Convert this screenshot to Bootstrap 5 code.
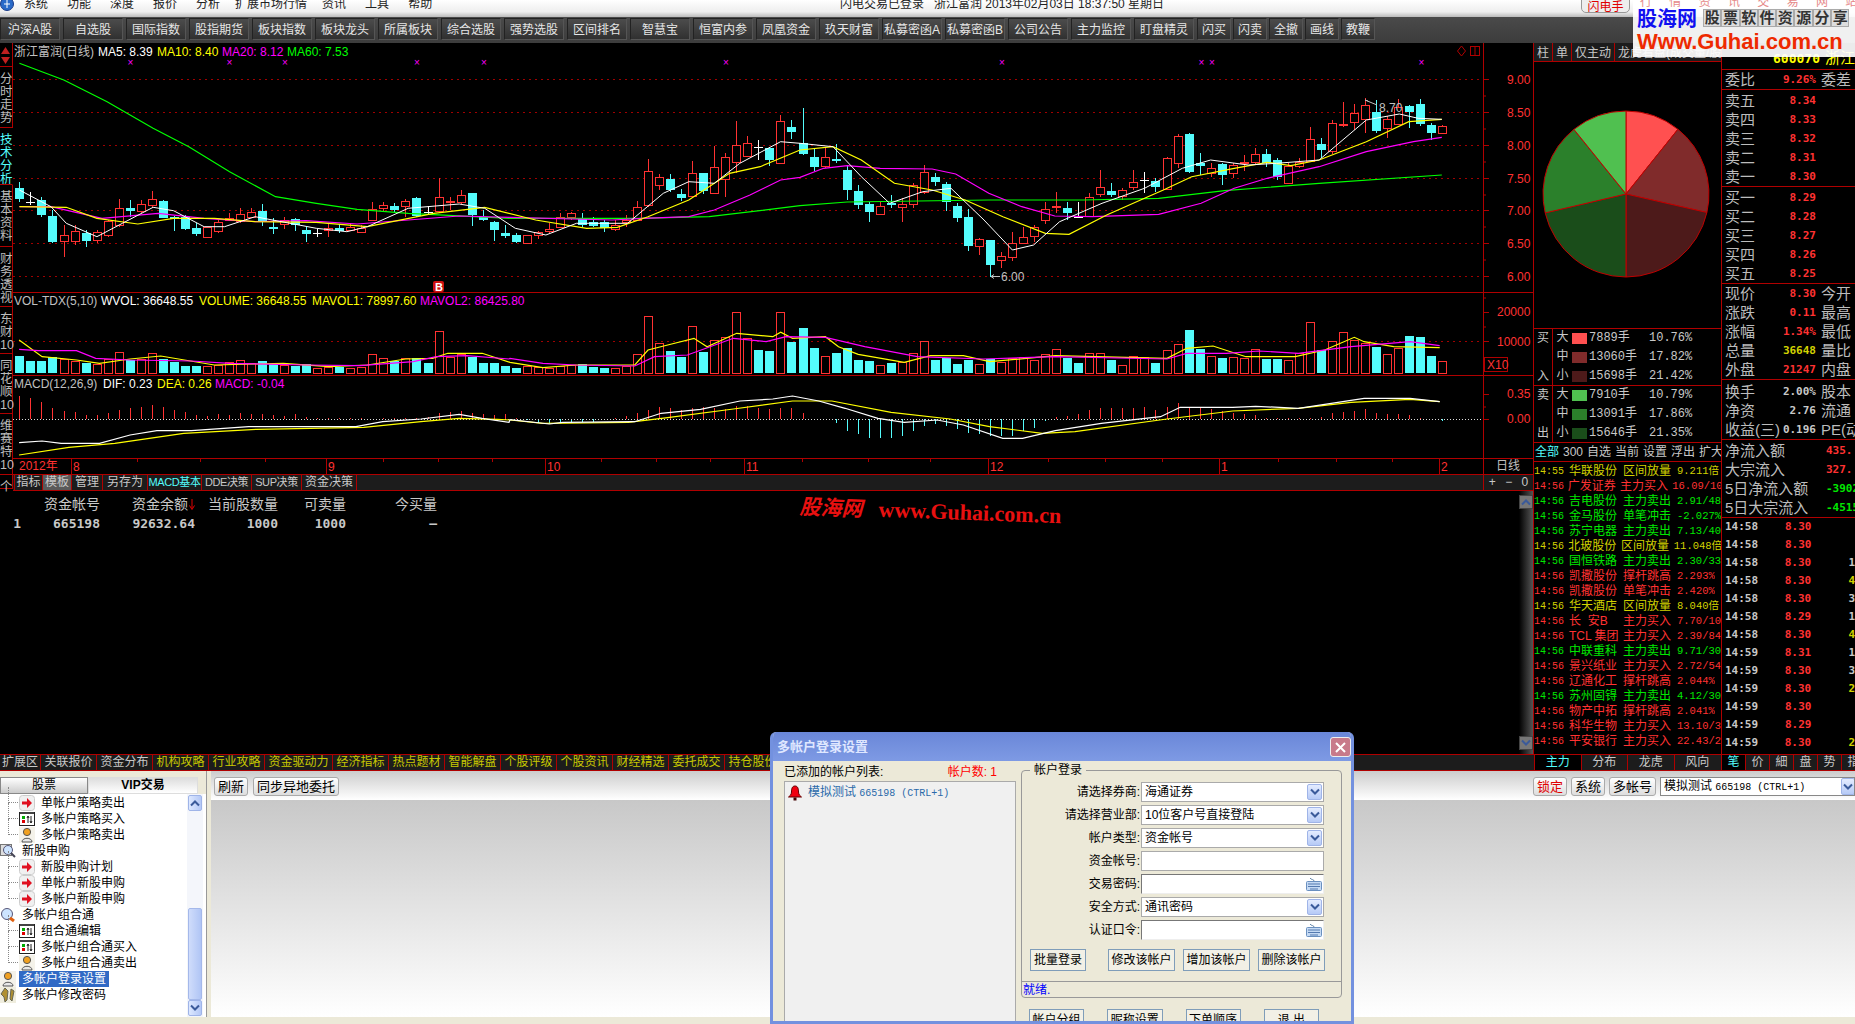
<!DOCTYPE html>
<html lang="zh-CN">
<head>
<meta charset="UTF-8">
<title>闪电手</title>
<link href="https://cdn.jsdelivr.net/npm/bootstrap@5.3.3/dist/css/bootstrap.min.css" rel="stylesheet">
<style>
  html,body{height:1024px;overflow:hidden}
  body{width:1855px;background:#000;color:#c8c8c8;font:12px/16px "Liberation Sans","Noto Sans CJK SC",sans-serif;position:relative}
  svg text{font-family:"Liberation Sans","Noto Sans CJK SC",sans-serif;font-size:12px}
  .mono-10{font-family:"Liberation Mono",monospace;font-size:10px}
  .menu-bar{height:17px;overflow:hidden;line-height:8px;color:#222;background:linear-gradient(#fff,#eee 70%,#bbb);padding-left:24px;gap:19px}
  .menu-wide{margin:0 -4px}
  .menu-title{position:absolute;left:840px;top:0}
  .menu-logo{position:absolute;left:0;top:-3px}
  .flash-btn{position:absolute;left:1581px;top:-4px;width:49px;height:17px;line-height:13px;padding-top:4px;text-align:center;color:#e00000;background:#eee;border:1px solid #999;border-radius:0 0 5px 5px}
  .tool-bar{height:26px;background:linear-gradient(#4a4a4a,#3c3c3c);gap:3px;padding-top:1px}
  .tool-btn{width:60px;height:22px;line-height:22px;text-align:center;color:#e6e6e6;background:linear-gradient(#4c4c4c,#303030);border:1px solid #222;border-right-color:#555;border-bottom-color:#555;white-space:nowrap;overflow:hidden}
  .tool-sm{width:34px;margin-right:-1px}
  .main-row{height:711px}
  .center-col{width:1533px}
  .rail{width:13px;background:#000}
  .rail-item{width:13px;line-height:13px;font-size:12.5px;padding-top:6px;border-bottom:1px solid #b00000;border-right:1px solid #b00000;text-align:left;box-sizing:border-box;color:#bcbcbc}
  .rail-on{color:#54fcfc;border-right-color:#000}
  .rail-arrows{height:24px;padding-top:3px;line-height:0}
  .tab-bar{height:17px;background:#1c1c1c;border-top:1px solid #b00000;border-bottom:1px solid #b00000}
  .tab-cell{height:100%;line-height:15px;border-right:1px solid #b00000;color:#c8c8c8;white-space:nowrap;text-align:center;overflow:hidden}
  .tab-on{background:#5a5a5a}
  .tab-cy{color:#54fcfc}
  .tab-lat{font-size:11px;letter-spacing:-.4px}
  .tab-side{margin-left:auto;width:50px;height:100%;border-left:1px solid #b00000;line-height:15px}
  .hold-wrap{height:263px}
  .hold-tbl{width:437px;font-size:14px;color:#c8c8c8;margin-top:3px}
  .hold-tbl td{padding:0;text-align:right;height:20px;font-family:"DejaVu Sans Mono","Noto Sans CJK SC",monospace;font-weight:bold;font-size:13px}
  .hold-tbl th{padding:0;text-align:right;height:20px;font-weight:normal;white-space:nowrap}
  .hold-sort{margin:0 0 0 1px;vertical-align:-1px}
  .dark-scroll{width:14px;height:100%;background:linear-gradient(90deg,#000,#555)}
  .dark-arrow{width:14px;height:14px;background:#777;border:1px solid #444;color:#222;display:flex;align-items:center;justify-content:center}
  .pie-col{width:189px;border-left:1px solid #b00000;border-right:1px solid #b00000}
  .pie-tabs{height:19px;border-bottom:1px solid #b00000;background:#1c1c1c;line-height:20px;white-space:nowrap;overflow:hidden}
  .pie-tabs span{border-right:1px solid #b00000;padding:0 3px;display:inline-block;height:18px}
  .pie-box{height:266px;line-height:0}
  .flow-box{height:57px;border-top:1px solid #b00000}
  .flow-side{width:19px;border-right:1px solid #b00000;font-size:12px;text-align:center;padding:1px 0}
  .flow-line{height:19px;line-height:19px;font-family:"Liberation Mono","Noto Sans CJK SC",monospace;white-space:nowrap}
  .flow-kind{width:19px;text-align:center}
  .flow-swatch{width:15px;height:11px;margin:0 2px 0 0}
  .flow-num{width:60px}
  .news-filter{height:19px;border-top:1px solid #b00000;line-height:18px;padding-left:1px;gap:4px;white-space:nowrap;overflow:hidden}
  .news-list{border-top:1px solid #b00000;padding-top:2px;overflow:hidden;flex:1}
  .news-line{height:15px;line-height:15px;white-space:nowrap;overflow:hidden}
  .news-t{width:35px;font-family:"Liberation Mono",monospace;font-size:10px}
  .news-n{width:54px}
  .news-k{width:54px}
  .news-d{font-family:"Liberation Mono","Noto Sans CJK SC",monospace;font-size:10.5px;overflow:hidden}
  .c-ye{color:#d2d200}
  .c-re{color:#ff3232}
  .c-gr{color:#00e800}
  .quote-col{width:133px;overflow:hidden}
  .quote-code{height:27px;padding:7px 0 0 51px;line-height:13px;color:#ff0;white-space:nowrap;font-family:"DejaVu Sans Mono","Noto Sans CJK SC",monospace;font-weight:bold;font-size:13px;border-bottom:1px solid #b00000}
  .quote-name{margin-left:5px;font-size:15px;font-weight:normal;font-family:"Noto Sans CJK SC",sans-serif}
  .quote-block{border-bottom:1px solid #b00000}
  .quote-pad{padding-top:1px}
  .quote-pad2{padding-top:2px}
  .quote-line{height:19px;line-height:19px;padding-left:3px;white-space:nowrap}
  .quote-lab{width:50px;font-size:15px;letter-spacing:0;flex:none;color:#bcbcbc}
  .quote-val{width:41px;text-align:right;font-family:"DejaVu Sans Mono",monospace;font-weight:bold;font-size:11px;flex:none}
  .quote-third{margin-left:5px;font-size:15px;flex:none;color:#bcbcbc}
  .flow-val{margin-left:auto;font-family:"DejaVu Sans Mono",monospace;font-weight:bold;font-size:11px;flex:none;width:29px;overflow:hidden}
  .tick-line{height:18px;line-height:18px;padding-left:3px;white-space:nowrap;font-family:"DejaVu Sans Mono",monospace;font-weight:bold;font-size:11px}
  .tick-t{width:60px;color:#c8c8c8}
  .tick-p{width:64px;color:#ff3232}
  .c-gy{color:#c8c8c8}
  .ext-row{height:17px;background:#1c1c1c;border-top:1px solid #b00000;border-bottom:1px solid #b00000}
  .ext-left{width:1533px;flex:none}
  .ext-mid{margin-left:1px;flex:none}
  .ext-right{margin-left:1px;flex:none}
  .ext-cell{width:56px;height:100%;line-height:15px;text-align:center;border-right:1px solid #b00000;color:#c8c800;white-space:nowrap;overflow:hidden}
  .ext-wide{width:68px}
  .ext-short{width:41px}
  .ext-gy{color:#c8c8c8}
  .ext-r1{width:46.500px;height:100%;line-height:15px;text-align:center;border-left:1px solid #b00000;color:#c8c8c8}
  .ext-r2{width:24px;height:100%;line-height:15px;text-align:center;border-left:1px solid #b00000;color:#c8c8c8}
  .ext-on{color:#54fcfc;background:#000}
  .lower-row{height:246px;background:#ece9d8;color:#000}
  .tree-wrap{width:207px;border-right:1px solid #999}
  .tree-tabs{height:23px;padding-top:6px;background:#ece9d8}
  .tree-tab{height:17px;line-height:15px;text-align:center;border:1px solid #888;background:linear-gradient(#fff,#ccc)}
  .tree-tab1{width:88px}
  .tree-tab2{width:110px;font-weight:bold;background:linear-gradient(#ddd,#fff);border-color:#ddd}
  .tree-box{height:223px;background:#fff}
  .tree-list{width:187px;padding-top:1px}
  .tree-item{height:16px;line-height:16px;white-space:nowrap;position:relative;padding-left:41px}
  .tree-item svg{position:absolute;left:19px;top:0}
  .tree-top{padding-left:22px}
  .tree-top svg{left:0}
  .tree-item:not(.tree-top)::before{content:"";position:absolute;left:8px;top:-8px;height:16px;width:10px;border-left:1px dotted #888;border-bottom:1px dotted #888}
  .tree-sel{background:#316ac5;color:#fff;display:inline-block;padding:0 3px;margin-left:-3px;line-height:16px}
  .xp-scroll{width:16px;background:#f4f6fb;padding:1px}
  .xp-arrow{height:16px;background:linear-gradient(90deg,#dde8ff,#b4c8f6);border:1px solid #9fb4e8;border-radius:2px;line-height:0;display:flex;align-items:center;justify-content:center}
  .xp-thumb{height:92px;background:linear-gradient(90deg,#cfdcfb,#b0c5f5);border:1px solid #a4b8ea;border-radius:2px}
  .work-pane{background:#fff}
  .work-bar{height:29px;background:linear-gradient(#ccc,#fff);padding:6px 0 0 3px;gap:5px}
  .work-body{flex:1;background:linear-gradient(#c8c8c8,#fff)}
  .btn.work-btn{height:19px;padding:0 3px;line-height:16px;font-size:13px;color:#000;background:linear-gradient(#fff,#ddd);border:1px solid #aaa;border-radius:3px;--bs-btn-border-radius:3px}
  .work-btn.lock-btn{color:#e00000}
  .work-select{width:195px;height:19px;background:#fff;border:1px solid #888;line-height:17px;padding-left:3px;white-space:nowrap;overflow:hidden;position:relative}
  .work-drop{position:absolute;right:-1px;top:0;bottom:0;width:14px;background:linear-gradient(#e4ecff,#b6caf6);border:1px solid #9fb4e8;border-radius:2px;display:flex;align-items:center;justify-content:center}
  .status-strip{height:7px;background:#ece9d8}
  .pop-dlg{left:770px;top:732px;width:584px;height:292px;background:#ece9d8;border:3px solid #7391df;border-top:0;border-radius:6px 6px 0 0;overflow:hidden;color:#000}
  .dlg-head{height:29px;margin:0 -3px;background:linear-gradient(#6a87d8,#7e9ae4);color:#dfe7ff;font-size:13px;font-weight:bold;padding-left:7px}
  .dlg-close{position:absolute;right:3px;top:5px;width:21px;height:20px;background:#c87a8a;border:1px solid #eee;border-radius:3px;line-height:0;display:flex;align-items:center;justify-content:center}
  .dlg-left{width:232px;margin:3px 5px 0 11px}
  .dlg-cap{height:17px}
  .dlg-count{color:#f00;margin-right:19px}
  .dlg-list{height:260px;background:#f0f0f0;border:1px solid #aaa;padding:2px}
  .dlg-acc{color:#2a6aaa;gap:6px;padding-left:1px}
  .dlg-right{width:321px;padding-top:9px}
  .acc-group{height:228px;border:1px solid #999;border-radius:4px;position:relative;padding-top:11px}
  .acc-legend{position:absolute;left:8px;top:-8px;background:#ece9d8;padding:0 4px;line-height:15px}
  .acc-field{height:20px;margin-bottom:3px}
  .acc-lab{width:119px;text-align:right;padding-right:1px;flex:none;white-space:nowrap}
  .acc-input{width:183px;height:100%;background:#fff;border:1px solid #aaa;padding-left:3px;line-height:18px;position:relative;white-space:nowrap;overflow:hidden}
  .acc-sunk{border-color:#777 #eee #eee #777}
  .acc-drop{position:absolute;right:1px;top:1px;bottom:1px;width:15px;background:linear-gradient(#e4ecff,#b6caf6);border:1px solid #9fb4e8;border-radius:2px;display:flex;align-items:center;justify-content:center}
  .acc-kbd{position:absolute;right:1px;top:2px;line-height:0}
  .btn.dlg-btn{height:22px;padding:0;width:56px;line-height:18px;font-size:12px;color:#000;background:#f2f0e6;border:1px solid #7f9db9;border-radius:0;--bs-btn-border-radius:0}
  .dlg-btn-wide{width:67px!important}
  .acc-btns{padding:6px 0 0 8px}
  .acc-status{margin-top:10px;height:17px;border-top:1px solid #999;color:#00f;padding-left:1px;line-height:16px}
  .dlg-foot{padding:11px 0 0 8px}
  .dlg-foot .dlg-btn{margin-right:23px}
  .logo-box{left:1633px;top:0;width:222px;height:57px;background:rgba(255,255,255,.92);overflow:hidden}
  .logo-faint{height:9px;line-height:5px;color:#e68a8a;padding:0 0 0 7px;font-size:12px;word-spacing:14px;white-space:nowrap;overflow:hidden}
  .logo-top{padding:0 3px 0 4px;line-height:20px}
  .logo-cn{color:#1010f0;font-size:20px;font-weight:bold;letter-spacing:0;flex:none}
  .logo-slogan{margin-left:6px;flex:none;white-space:nowrap}
  .logo-slogan span{display:inline-block;width:18.3px;height:18px;line-height:17px;text-align:center;font-weight:bold;font-size:15px;color:#333;background:#ddd;border:1px solid #aaa;font-family:"Liberation Serif","Noto Sans CJK SC",serif}
  .logo-url{color:#ee2a00;font-size:22px;font-weight:bold;line-height:25px;padding-left:4px;white-space:nowrap}
  .stamp{left:800px;top:495px;transform:rotate(2deg);transform-origin:left top;color:#e81010;font-family:"Liberation Serif","Noto Sans CJK SC",serif;font-weight:bold;white-space:nowrap;line-height:24px}
  .stamp-cn{font-size:21px;font-style:italic;margin-right:16px}
  .stamp-en{font-size:22px}
</style>
</head>
<body>

<svg width="0" height="0" class="position-absolute">
  <symbol id="ic-arrow" viewBox="0 0 16 16"><rect x=".5" y=".5" width="15" height="15" rx="3" fill="#f0f0f0" stroke="#ccc"/><path d="M3 6.500h5V3l5 5-5 5V9.500H3z" fill="#e01020"/></symbol>
  <symbol id="ic-chart" viewBox="0 0 16 16"><rect x=".5" y="1.500" width="15" height="13" fill="#fff" stroke="#222"/><rect x="1" y="1" width="14" height="2" fill="#444"/><rect x="3" y="5" width="3" height="3" fill="#0a0"/><rect x="3" y="9" width="3" height="3" fill="#d00"/><path d="M9 12V5m-1 2 1-2 1 2M12 5v7m-1-2 1 2 1-2" stroke="#222" fill="none"/></symbol>
  <symbol id="ic-user" viewBox="0 0 16 16"><rect width="16" height="16" fill="#f4f2ea"/><circle cx="8" cy="5" r="3.600" fill="#f0a020" stroke="#555"/><path d="M3 15c0-5 10-5 10 0z" fill="#e8e8e8" stroke="#555"/></symbol>
  <symbol id="ic-zoom" viewBox="0 0 16 16"><rect x=".5" y="1.500" width="11" height="11" fill="#ddd" stroke="#777"/><circle cx="8" cy="7" r="4.500" fill="#cde4ff" stroke="#557"/><path d="M11 10l4 4" stroke="#445" stroke-width="2"/></symbol>
  <symbol id="ic-zoomfire" viewBox="0 0 16 16"><circle cx="7" cy="7" r="5.500" fill="#cde4ff" stroke="#557"/><path d="M10 11l4 3" stroke="#e06010" stroke-width="3"/></symbol>
  <symbol id="ic-key" viewBox="0 0 16 16"><rect width="16" height="16" fill="#efedde"/><path d="M5 1l3 3-1 9-2 2-1-5-3-3zM11 2l3 2-2 10-2-2z" fill="#b09030" stroke="#665"/></symbol>
  <symbol id="ic-bell" viewBox="0 0 14 16"><path d="M7 1c3 0 3.500 3 3.500 6s2 4 3 5H.5c1-1 3-2 3-5S4 1 7 1z" fill="#f00010" stroke="#600"/><rect x="5.500" y="12.500" width="3" height="3" fill="#400"/></symbol>
  <symbol id="ic-kbd" viewBox="0 0 16 14"><path d="M4 1c1 2 4 1 4 3" stroke="#68a" fill="none"/><rect x=".5" y="4.500" width="15" height="9" rx="1" fill="#c5daf4" stroke="#6a90c0"/><path d="M2 7h12M2 9.500h12M4 12h8" stroke="#557ab0"/></symbol>
  <symbol id="ic-down" viewBox="0 0 10 8"><path d="M1 1.500l4 4 4-4" fill="none" stroke="#3a5a9a" stroke-width="2"/></symbol>
  <symbol id="ic-up" viewBox="0 0 10 8"><path d="M1 6.500l4-4 4 4" fill="none" stroke="#3a5a9a" stroke-width="2"/></symbol>
</svg>

<div class="menu-bar d-flex" id="menuBar"></div>
<div class="tool-bar d-flex" id="toolBar"></div>

<div class="main-row d-flex">
  <div class="center-col d-flex flex-column">
    <div class="d-flex">
      <div class="rail" id="rail"></div>
      <div class="d-flex flex-column flex-grow-1">
        <svg id="chart" width="1520" height="431" viewBox="13 43 1520 431" class="d-block"></svg>
        <div class="tab-bar d-flex" id="tabBar"></div>
      </div>
    </div>
    <div class="hold-wrap d-flex justify-content-between">
      <table class="hold-tbl align-self-start">
        <colgroup><col width="21"><col width="79"><col width="95"><col width="83"><col width="68"><col width="91"></colgroup>
        <tr><th></th><th>资金帐号</th><th>资金余额<svg class="hold-sort" width="6" height="11"><path d="M3 0v9M.5 6.500L3 10.500l2.500-4" fill="none" stroke="#e00000"/></svg></th><th>当前股数量</th><th>可卖量</th><th>今买量</th></tr>
        <tr><td>1</td><td>665198</td><td>92632.64</td><td>1000</td><td>1000</td><td>—</td></tr>
      </table>
      <div class="dark-scroll d-flex flex-column justify-content-between py-1">
        <div class="dark-arrow"><svg width="10" height="8"><use href="#ic-up"/></svg></div>
        <div class="dark-arrow"><svg width="10" height="8"><use href="#ic-down"/></svg></div>
      </div>
    </div>
  </div>

  <div class="pie-col d-flex flex-column">
    <div class="pie-tabs"><span>柱</span><span>单</span><span>仅主动</span><span>龙虎看盘(成交量/股数)</span></div>
    <div class="pie-box"><svg id="pie" width="187" height="266"></svg></div>
    <div class="flow-box d-flex" id="flowBuy"></div>
    <div class="flow-box d-flex" id="flowSell"></div>
    <div class="news-filter d-flex"><span class="tab-cy">全部</span><span>300</span><span>自选</span><span>当前</span><span>设置</span><span>浮出</span><span>扩大</span></div>
    <div class="news-list" id="newsList"></div>
  </div>

  <div class="quote-col" id="quoteCol"></div>
</div>

<div class="ext-row d-flex">
  <div class="ext-left d-flex" id="extLeft"></div>
  <div class="ext-mid d-flex" id="extMid"></div>
  <div class="ext-right d-flex" id="extRight"></div>
</div>

<div class="lower-row d-flex">
  <div class="tree-wrap">
    <div class="tree-tabs d-flex"><div class="tree-tab tree-tab1">股票</div><div class="tree-tab tree-tab2">VIP交易</div></div>
    <div class="tree-box d-flex">
      <div class="tree-list" id="treeList"></div>
      <div class="xp-scroll d-flex flex-column">
        <div class="xp-arrow"><svg width="10" height="8"><use href="#ic-up"/></svg></div>
        <div class="flex-grow-1 d-flex flex-column justify-content-end">
          <div class="xp-thumb"></div>
        </div>
        <div class="xp-arrow"><svg width="10" height="8"><use href="#ic-down"/></svg></div>
      </div>
    </div>
  </div>
  <div class="work-pane flex-grow-1 d-flex flex-column ms-1">
    <div class="work-bar d-flex">
      <button class="btn work-btn">刷新</button>
      <button class="btn work-btn">同步异地委托</button>
      <div class="ms-auto d-flex gap-1">
        <button class="btn work-btn lock-btn">锁定</button>
        <button class="btn work-btn">系统</button>
        <button class="btn work-btn">多帐号</button>
        <div class="work-select">模拟测试 <span class="mono-10">665198 (CTRL+1)</span><span class="work-drop"><svg width="10" height="8"><use href="#ic-down"/></svg></span></div>
      </div>
    </div>
    <div class="work-body"></div>
  </div>
</div>
<div class="status-strip"></div>

<div class="stamp position-absolute"><span class="stamp-cn">股海网</span><span class="stamp-en">www.Guhai.com.cn</span></div>

<div class="logo-box position-absolute">
  <div class="logo-faint">行 情 资 讯 交 易 网 站</div>
  <div class="logo-top d-flex align-items-center">
    <span class="logo-cn">股海网</span>
    <span class="logo-slogan"><span>股</span><span>票</span><span>软</span><span>件</span><span>资</span><span>源</span><span>分</span><span>享</span></span>
  </div>
  <div class="logo-url">Www.Guhai.com.cn</div>
</div>

<div class="pop-dlg position-absolute">
  <div class="dlg-head d-flex align-items-center position-relative">
    多帐户登录设置
    <div class="dlg-close"><svg width="11" height="11"><path d="M1 1l9 9M10 1l-9 9" stroke="#fff" stroke-width="2"/></svg></div>
  </div>
  <div class="d-flex">
    <div class="dlg-left">
      <div class="dlg-cap d-flex"><span>已添加的帐户列表:</span><span class="dlg-count ms-auto">帐户数: 1</span></div>
      <div class="dlg-list">
        <div class="dlg-acc d-flex align-items-center"><svg width="14" height="16"><use href="#ic-bell"/></svg><span>模拟测试 <span class="mono-10">665198 (CTRL+1)</span></span></div>
      </div>
    </div>
    <div class="dlg-right">
      <div class="acc-group">
        <div class="acc-legend">帐户登录</div>
        <div id="accFields"></div>
        <div class="acc-btns d-flex">
          <button class="btn dlg-btn">批量登录</button>
          <button class="btn dlg-btn dlg-btn-wide ms-auto">修改该帐户</button>
          <button class="btn dlg-btn dlg-btn-wide ms-2">增加该帐户</button>
          <button class="btn dlg-btn dlg-btn-wide ms-2 me-3">删除该帐户</button>
        </div>
        <div class="acc-status">就绪.</div>
      </div>
      <div class="dlg-foot d-flex">
        <button class="btn dlg-btn">帐户分组</button>
        <button class="btn dlg-btn">昵称设置</button>
        <button class="btn dlg-btn">下单顺序</button>
        <button class="btn dlg-btn">退 出</button>
      </div>
    </div>
  </div>
</div>

<script>
  const $ = id => document.getElementById(id);

  // 菜单和工具栏
  const menus = ['系统','功能','深度','报价','分析','扩展市场行情','资讯','工具','帮助'];
  $('menuBar').innerHTML = `<svg class="menu-logo" width="15" height="14"><circle cx="7" cy="7" r="6.500" fill="#2a6ac8" stroke="#1a3a88"/><path d="M4 7h6M7 3v8" stroke="#fff"/></svg>`
    + menus.map(m => `<span class="${m.length > 2 ? 'menu-wide' : ''}">${m}</span>`).join('')
    + `<span class="menu-title">闪电交易已登录 &nbsp; 浙江富润 2013年02月03日 18:37:50 星期日</span><span class="flash-btn">闪电手</span>`;

  const tools = ['沪深A股','自选股','国际指数','股指期货','板块指数','板块龙头','所属板块','综合选股','强势选股','区间排名','智慧宝','恒富内参','凤凰资金','玖天财富','私募密函A','私募密函B','公司公告','主力监控','盯盘精灵','闪买','闪卖','全撤','画线','教鞭'];
  $('toolBar').innerHTML = tools.map(t => `<div class="tool-btn ${t.length == 2 ? 'tool-sm' : ''}">${t}</div>`).join('');

  // 左边竖条
  const railItems = [['分时走势',61],['技术分析',57,1],['基本资料',62],['财务透视',60],['东财10',47],['同花顺10',60],['维赛特10',61],['个',14]];
  $('rail').innerHTML = `<div class="rail-item rail-arrows"><svg width="11" height="19"><path d="M1 8l4.500-7 4.500 7zM1 11l4.500 7 4.500-7z" fill="#c02020"/></svg></div>`
    + railItems.map(r => `<div class="rail-item ${r[2] ? 'rail-on' : ''}" style="height:${r[1]}px">${r[0]}</div>`).join('');

  // K线 类型 顶 底 高 低 (放大图里的 y)
  const K = `c 565 597 545 605|w 607 607 575 615|c 600 645 590 650|c 648 725 630 730|r 706 724 675 770|r 694 724 675 735|c 699 722 690 740|r 697 722 690 730|r 663 705 660 710|r 625 677 597 680|c 625 633 600 650|r 612 632 600 640|r 598 617 573 620|c 603 653 600 655|c 650 655 648 692|c 650 687 645 690|c 684 702 670 708|r 682 712 680 713|r 665 692 660 700|r 655 660 640 664|r 643 665 625 668|r 636 652 625 655|c 633 665 612 678|c 680 686 655 702|r 660 672 650 688|c 658 675 655 692|c 690 702 680 726|w 700 700 688 710|r 683 688 670 710|c 685 695 672 700|r 680 688 670 692|r 683 694 675 696|r 627 660 605 662|r 615 623 605 632|c 618 630 608 635|r 602 617 597 650|c 595 650 590 652|w 636 636 618 645|r 592 635 535 640|r 604 608 590 630|r 586 608 570 612|c 580 645 578 678|c 650 660 630 662|c 666 690 664 722|c 700 710 675 715|c 706 728 700 730|r 706 730 704 732|r 695 705 692 716|r 688 695 670 698|r 650 680 640 685|r 638 650 636 660|c 656 675 640 680|c 665 678 650 682|c 665 683 660 695|r 676 688 660 692|r 660 665 645 680|r 620 658 603 660|r 512 613 478 622|r 530 553 522 570|c 538 570 522 575|c 583 594 568 602|r 518 586 484 595|c 520 575 518 582|r 500 577 438 580|r 470 535 458 592|r 434 485 364 520|r 428 466 408 470|w 440 440 420 480|c 445 480 440 498|r 362 488 346 490|c 382 398 360 418|c 428 460 325 465|c 472 503 445 512|r 472 500 440 505|c 478 483 432 490|c 510 570 495 600|c 573 614 555 628|c 612 636 605 665|r 617 640 605 645|c 610 616 585 625|r 612 622 595 665|r 556 612 550 625|r 517 578 495 582|c 530 546 520 558|c 552 605 545 632|c 618 655 610 665|c 652 740 628 752|r 718 738 715 765|c 720 795 720 830|r 767 778 755 803|r 730 772 695 782|r 710 728 680 732|r 680 708 675 725|r 628 662 605 672|r 618 622 575 640|c 624 638 605 660|w 650 650 605 652|r 592 650 578 652|r 562 584 510 590|c 573 584 550 590|r 571 590 565 600|r 547 563 510 570|w 540 540 516 580|c 543 562 535 575|r 475 567 472 570|r 408 490 403 505|c 402 516 400 518|c 490 500 460 525|r 505 520 490 530|c 492 524 490 555|r 494 517 488 535|r 487 490 465 512|r 463 488 445 495|c 463 490 448 500|c 480 530 475 540|r 498 548 488 550|r 485 498 475 505|r 416 482 380 485|c 433 452 415 475|r 370 455 360 462|r 372 376 306 380|r 338 365 312 390|r 316 358 295 400|c 337 393 300 398|r 358 386 348 415|r 320 370 298 375|c 318 335 316 385|c 313 372 296 378|c 375 398 368 420|r 377 398 375 400`.split('|').map(s => s.split(' '));

  const VOL = [213,228,228,215,-222,-228,233,-238,-222,-202,225,-222,-203,222,232,243,243,-243,-240,-232,-226,-235,228,238,-240,243,238,-250,-245,245,-250,-245,-208,-220,228,-220,218,233,-139,-215,-208,215,233,233,243,248,-243,-245,-250,-243,-241,238,246,250,-250,-244,-208,-94,-175,198,216,-124,201,-165,-157,-82,-160,195,198,-82,171,129,189,-214,204,189,225,228,-241,233,-232,-204,-169,225,220,236,224,-238,222,-232,-218,-216,-225,-208,-192,220,234,-203,-205,226,-241,-214,-216,234,-196,-178,135,192,-214,219,-216,-219,-192,222,222,-226,-205,-112,195,-169,-142,-165,-175,186,-207,-190,153,156,213,-229];

  const HIST = [70,63,51,33,25,21,13,13,18,28,33,38,43,36,28,23,13,10,15,13,20,17,15,13,10,15,7,5,5,3,3,3,2,5,5,3,5,7,20,23,25,18,15,13,15,5,-3,-10,-13,-8,-10,-8,-8,-3,3,10,20,28,38,35,28,35,38,34,30,40,40,35,32,35,33,20,2,1,-10,-35,-45,-55,-55,-55,-50,-35,-20,-15,-20,-30,-40,-45,-50,-50,-50,-35,-25,-5,8,10,15,28,33,35,33,35,38,28,38,50,35,33,30,25,18,15,12,3,3,3,3,5,8,18,22,25,32,18,15,15,12,5,2,-5];

  const kx = i => Math.round(19.4 + 11.03 * i);
  const z1 = p => [p[0] / 1.96, p[1] / 3];
  const z2 = p => [800 + p[0] / 2.119, p[1] / 3];
  const z6 = p => [p[0] / 2.613, 285 + p[1] / 3];
  const z12 = p => [510 + p[0] / 1.522, 285 + p[1] / 3];
  // 两张放大图的点接起来
  const join = (a, fa, b, fb, cut) => a.map(fa).filter(p => p[0] < cut).concat(b.map(fb)).map(p => p[0].toFixed(1) + ',' + p[1].toFixed(1)).join(' ');
  const poly = (pts, col, w) => `<polyline points="${pts}" fill="none" stroke="${col}" stroke-width="${w || 1}"/>`;
  const txt = (x, y, s, col, extra) => `<text x="${x}" y="${y}" fill="${col}" ${extra || ''}>${s}</text>`;
  const RED = '#b00000', UP = '#ff3232', CY = '#54fcfc';

  let g = '';
  // 分隔线
  [292.5,375.5,458.5].forEach(y => g += `<path d="M13 ${y}H1533" stroke="${RED}"/>`);
  g += `<path d="M1483.500 43V474" stroke="${RED}"/>`;
  // 价格网格
  [[79.5,'9.00'],[112.5,'8.50'],[145.5,'8.00'],[178.5,'7.50'],[210.5,'7.00'],[243.5,'6.50'],[276.5,'6.00']].forEach((r, i) => {
    g += `<path d="M13 ${r[0]}H1483" stroke="#a00000" stroke-dasharray="2 4"/><path d="M1483 ${r[0]}h6" stroke="${RED}"/>`;
    if (i < 6) g += `<path d="M1483 ${r[0] + 16.5}h3" stroke="${RED}"/>`;
    g += txt(1507, r[0] + 4.5, r[1], UP);
  });
  // 标题
  g += txt(14, 56, '浙江富润(日线)', '#c0c0c0') + txt(98, 56, 'MA5: 8.39', '#fff') + txt(157, 56, 'MA10: 8.40', '#ff0') + txt(222, 56, 'MA20: 8.12', '#f0f') + txt(287, 56, 'MA60: 7.53', '#0f0');
  [130.6,229.6,285,417,484,726,1002,1201.6,1212,1421.5].forEach(x => g += txt(x - 3, 66, '×', '#f0f', 'style="font-size:10px"'));
  g += `<path d="M1461.500 46l4 5-4 5-4-5z" fill="none" stroke="${RED}"/><rect x="1470.500" y="46.500" width="9" height="9" fill="none" stroke="${RED}"/><path d="M1475 46v10" stroke="${RED}"/>`;
  // 蜡烛
  K.forEach((k, i) => {
    const x = kx(i), t = +k[1] / 3, b = +k[2] / 3, h = +k[3] / 3, l = +k[4] / 3;
    const col = k[0] == 'r' ? UP : k[0] == 'c' ? CY : '#fff';
    g += `<path d="M${x + .5} ${h}V${l}" stroke="${col}" shape-rendering="crispEdges"/>`;
    if (k[0] == 'w') g += `<path d="M${x - 4} ${t + .5}h9" stroke="#fff" shape-rendering="crispEdges"/>`;
    else if (k[0] == 'r') g += `<rect x="${x - 3.5}" y="${Math.round(t) + .5}" width="8" height="${Math.max(1, Math.round(b - t))}" fill="#000" stroke="${col}" shape-rendering="crispEdges"/>`;
    else g += `<rect x="${x - 4}" y="${Math.round(t)}" width="9" height="${Math.max(2, Math.round(b - t))}" fill="${col}" shape-rendering="crispEdges"/>`;
  });
  // 均线
  g += poly(join([[38,190],[125,240],[210,305],[300,385],[370,440],[450,515],[540,590],[620,610],[700,628],[800,640],[1000,655],[1250,655],[1390,650],[1568,618]], z1,
    [[0,617],[100,606],[400,600],[600,600],[760,595],[900,572],[1100,550],[1360,525]], z2, 800), '#0f0', 1.2);
  g += poly(join([[38,620],[100,620],[200,655],[310,640],[400,655],[500,665],[600,662],[700,672],[800,660],[900,648],[1000,652],[1200,660],[1260,655],[1350,650],[1400,630],[1470,585],[1530,540],[1568,530]], z1,
    [[0,532],[50,505],[100,497],[170,505],[280,507],[330,522],[400,580],[470,620],[540,648],[620,650],[760,643],[850,610],[920,565],[990,535],[1100,500],[1200,455],[1300,425],[1360,412]], z2, 800), '#f0f', 1.2);
  g += poly(join([[38,620],[130,622],[190,655],[270,672],[340,655],[420,655],[500,665],[620,667],[720,680],[850,640],[950,622],[1050,660],[1150,685],[1210,682],[1270,650],[1350,600],[1430,520],[1490,500],[1568,455]], z1,
    [[0,450],[70,440],[130,480],[200,550],[280,570],[350,600],[430,650],[520,700],[570,703],[650,645],[730,595],[770,570],[830,530],[920,505],[990,487],[1040,497],[1100,480],[1200,425],[1290,365],[1360,358]], z2, 800), '#ff0', 1.2);
  g += poly(join([[38,570],[100,620],[130,670],[190,710],[240,670],[300,622],[340,632],[400,680],[440,680],[500,650],[620,685],[680,695],[720,680],[800,625],[900,612],[950,625],[1010,685],[1070,705],[1130,670],[1230,670],[1300,580],[1350,545],[1400,550],[1450,490],[1530,425],[1568,425]], z1,
    [[0,430],[70,440],[130,530],[190,610],[260,575],[320,565],[390,660],[450,750],[495,735],[550,665],[640,610],[730,565],[810,505],[870,480],[950,495],[1010,490],[1100,480],[1200,360],[1270,342],[1310,355],[1360,358]], z2, 800), '#fff', 1);
  // 最高最低标注
  g += `<path d="M991 276.500h9M991 276.500l3-2M991 276.500l3 2M1365 100l12 5M1365 100l3 1" stroke="#c0c0c0" fill="none"/>` + txt(1001, 281, '6.00', '#c0c0c0') + txt(1379, 112, '8.70', '#c0c0c0');
  g += `<rect x="433" y="281" width="11" height="11" rx="2" fill="#d01010"/>` + txt(435, 291, 'B', '#fff', 'style="font-size:11px;font-weight:bold"');

  // 成交量
  g += `<path d="M13 341.500H1483" stroke="#a00000" stroke-dasharray="2 4"/>`;
  g += txt(14, 305, 'VOL-TDX(5,10)', '#c0c0c0') + txt(101, 305, 'WVOL: 36648.55', '#fff') + txt(199, 305, 'VOLUME: 36648.55', '#ff0') + txt(312, 305, 'MAVOL1: 78997.60', '#ff0') + txt(420, 305, 'MAVOL2: 86425.80', '#f0f');
  VOL.forEach((v, i) => {
    const x = kx(i), top = Math.round(285 + Math.abs(v) / 3);
    g += v < 0 ? `<rect x="${x - 3.5}" y="${top + .5}" width="8" height="${373 - top}" fill="#000" stroke="${UP}" shape-rendering="crispEdges"/>`
      : `<rect x="${x - 4}" y="${top}" width="9" height="${373 - top}" fill="${CY}" shape-rendering="crispEdges"/>`;
  });
  g += poly(join([[50,165],[110,215],[200,225],[260,235],[340,222],[420,213],[560,240],[740,235],[860,245],[960,240],[1060,222],[1130,220],[1170,205],[1260,205],[1340,232]], z6,
    [[0,232],[50,248],[100,240],[190,240],[210,195],[240,180],[280,160],[300,185],[345,145],[400,155],[412,142],[430,160],[480,155],[500,185],[530,208],[600,232],[640,212],[690,212],[730,230],[830,212],[1000,220],[1030,190],[1070,183],[1120,215],[1195,215],[1240,195],[1285,157],[1300,170],[1345,185],[1415,188]], z12, 510), '#ff0', 1.2);
  g += poly(join([[50,193],[100,197],[200,197],[250,220],[340,225],[500,228],[600,235],[800,240],[940,242],[1080,230],[1140,215],[1220,212],[1330,222]], z6,
    [[0,220],[50,235],[100,240],[190,243],[220,215],[270,210],[340,160],[390,170],[420,155],[480,157],[540,185],[620,215],[720,222],[830,215],[1000,222],[1030,205],[1090,205],[1140,198],[1200,205],[1280,185],[1370,170],[1415,182]], z12, 510), '#f0f', 1.2);
  g += txt(1497, 316, '20000', UP) + txt(1497, 346, '10000', UP) + `<path d="M1483 312.500h6M1483 341.500h6M1483 327h3M1483 298h3" stroke="${RED}"/>`;
  g += `<rect x="1484.500" y="357.500" width="23" height="14" fill="none" stroke="${RED}"/>` + txt(1487, 369, 'X10', UP);

  // MACD
  g += txt(14, 388, 'MACD(12,26,9)', '#c0c0c0') + txt(103, 388, 'DIF: 0.23', '#fff') + txt(157, 388, 'DEA: 0.26', '#ff0') + txt(215, 388, 'MACD: -0.04', '#f0f');
  HIST.forEach((v, i) => {
    const x = kx(i) + .5;
    g += `<path d="M${x} 419.300V${419.3 - v / 3}" stroke="${v > 0 ? UP : CY}" shape-rendering="crispEdges"/>`;
  });
  g += `<path d="M13 419.500H1483" stroke="#ddd" stroke-dasharray="1 2"/>`;
  g += poly(join([[50,510],[180,487],[300,475],[480,445],[670,433],[950,427],[1100,410],[1200,400],[1300,403]], z6,
    [[0,405],[50,415],[180,412],[240,398],[340,372],[430,348],[490,348],[580,382],[670,402],[730,425],[810,445],[860,440],[1000,402],[1100,378],[1200,370],[1280,352],[1370,343],[1415,350]], z12, 510), '#ff0', 1.2);
  g += poly(join([[50,473],[110,468],[160,475],[260,475],[340,450],[410,437],[500,437],[650,425],[930,425],[1000,410],[1100,402],[1200,388],[1260,400],[1330,412]], z6,
    [[0,404],[60,417],[80,412],[190,410],[230,385],[290,373],[350,348],[400,342],[430,333],[470,348],[510,370],[560,400],[600,412],[650,405],[690,420],[750,460],[780,460],[830,437],[900,415],[990,395],[1020,367],[1100,367],[1135,364],[1200,370],[1300,340],[1370,340],[1415,350]], z12, 510), '#fff', 1.2);
  g += txt(1507, 398, '0.35', UP) + txt(1507, 423, '0.00', UP) + `<path d="M1483 394.500h6M1483 419.500h6M1483 407h3" stroke="${RED}"/>`;

  // 日期条
  g += txt(19, 470, '2012年', UP);
  [[73,'8'],[328,'9'],[547,'10'],[746,'11'],[990,'12'],[1221,'1'],[1441,'2']].forEach(d => g += `<path d="M${d[0] - 1.5} 458V474" stroke="${RED}"/>` + txt(d[0], 471, d[1], UP));
  [137,200,265,383,438,492,601,656,710,802,868,930,1048,1105,1162,1278,1336,1392].forEach(x => g += `<path d="M${x + .5} 458v4" stroke="${RED}"/>`);
  g += txt(1496, 470, '日线', '#c0c0c0');
  $('chart').innerHTML = g;

  // 指标条
  const tabs = [['指标',28],['模板',29,'tab-on'],['管理',31],['另存为',45],['MACD基本',54,'tab-cy tab-lat'],['DDE决策',50,'tab-lat'],['SUP决策',50,'tab-lat'],['资金决策',55]];
  $('tabBar').innerHTML = `<div class="tab-cell" style="width:2px"></div>` + tabs.map(t => `<div class="tab-cell ${t[2] || ''}" style="width:${t[1]}px">${t[0]}</div>`).join('')
    + `<div class="tab-side d-flex justify-content-around">${['+','−','0'].map(s => `<span>${s}</span>`).join('')}</div>`;

  // 饼图
  const slices = [[10.76,'#ff5050'],[17.82,'#802b2b'],[21.42,'#4d1a1a'],[21.35,'#1a4d1a'],[17.86,'#2b802b'],[10.79,'#50c050']];
  let acc = 0, pg = '';
  slices.forEach(s => {
    const a0 = acc / 100 * 2 * Math.PI, a1 = (acc + s[0]) / 100 * 2 * Math.PI;
    acc += s[0];
    const p = a => (92 + 83 * Math.sin(a)).toFixed(1) + ' ' + (132 - 83 * Math.cos(a)).toFixed(1);
    pg += `<path d="M92 132L${p(a0)}A83 83 0 ${s[0] > 50 ? 1 : 0} 1 ${p(a1)}Z" fill="${s[1]}" stroke="#c00000"/>`;
  });
  $('pie').innerHTML = pg;

  // 买入卖出
  const flowRows = (a, b, rows) => `<div class="flow-side d-flex flex-column justify-content-between"><span>${a}</span><span>${b}</span></div><div class="flex-grow-1">`
    + rows.map(r => `<div class="flow-line d-flex align-items-center"><span class="flow-kind">${r[0]}</span><span class="flow-swatch" style="background:${r[1]}"></span><span class="flow-num">${r[2]}手</span><span>${r[3]}</span></div>`).join('') + '</div>';
  $('flowBuy').innerHTML = flowRows('买','入',[['大','#ff5050','7889','10.76%'],['中','#802b2b','13060','17.82%'],['小','#4d1a1a','15698','21.42%']]);
  $('flowSell').innerHTML = flowRows('卖','出',[['大','#50c050','7910','10.79%'],['中','#2b802b','13091','17.86%'],['小','#1a4d1a','15646','21.35%']]);

  // 主力新闻
  const news = [['14:55','华联股份','区间放量','9.211倍','c-ye'],['14:56','广发证券','主力买入','16.09/10','c-re'],['14:56','吉电股份','主力卖出','2.91/48','c-gr'],['14:56','金马股份','单笔冲击','-2.027%','c-gr'],['14:56','苏宁电器','主力卖出','7.13/40','c-gr'],['14:56','北玻股份','区间放量','11.048倍','c-ye'],['14:56','国恒铁路','主力卖出','2.30/33','c-gr'],['14:56','凯撒股份','撑杆跳高','2.293%','c-re'],['14:56','凯撒股份','单笔冲击','2.420%','c-re'],['14:56','华天酒店','区间放量','8.040倍','c-ye'],['14:56','长 &nbsp;安B','主力买入','7.70/10','c-re'],['14:56','TCL 集团','主力买入','2.39/84','c-re'],['14:56','中联重科','主力卖出','9.71/30','c-gr'],['14:56','景兴纸业','主力买入','2.72/54','c-re'],['14:56','辽通化工','撑杆跳高','2.044%','c-re'],['14:56','苏州固锝','主力卖出','4.12/30','c-gr'],['14:56','物产中拓','撑杆跳高','2.041%','c-re'],['14:56','科华生物','主力买入','13.10/3','c-re'],['14:56','平安银行','主力买入','22.43/2','c-re']];
  $('newsList').innerHTML = news.map(n => `<div class="news-line d-flex ${n[4]}"><span class="news-t">${n[0]}</span><span class="news-n">${n[1]}</span><span class="news-k">${n[2]}</span><span class="news-d">${n[3]}</span></div>`).join('');

  // 右边报价
  const qLine = (lab, val, third, col) => `<div class="quote-line d-flex align-items-center"><span class="quote-lab">${lab}</span><span class="quote-val ${col || 'c-re'}">${val}</span><span class="quote-third">${third || ''}</span></div>`;
  const block = (rows, pad) => `<div class="quote-block ${pad || ''}">${rows.join('')}</div>`;
  const flowLine = (lab, val, col) => `<div class="quote-line d-flex align-items-center"><span class="quote-lab flex-shrink-0 w-auto">${lab}</span><span class="flow-val ${col}">${val}</span></div>`;
  const ticks = [['14:58','8.30','',''],['14:58','8.30','',''],['14:58','8.30','1','c-gy'],['14:58','8.30','4','c-ye'],['14:58','8.30','3','c-gy'],['14:58','8.29','1','c-gy'],['14:58','8.30','4','c-ye'],['14:59','8.31','1','c-gy'],['14:59','8.30','3','c-gy'],['14:59','8.30','2','c-ye'],['14:59','8.30','',''],['14:59','8.29','',''],['14:59','8.30','2','c-ye']];
  $('quoteCol').innerHTML = `<div class="quote-code">600070<span class="quote-name">浙江</span></div>`
    + block([qLine('委比','9.26%','委差')])
    + block(['卖五 8.34','卖四 8.33','卖三 8.32','卖二 8.31','卖一 8.30'].map(s => qLine(s.split(' ')[0], s.split(' ')[1])), 'quote-pad')
    + block(['买一 8.29','买二 8.28','买三 8.27','买四 8.26','买五 8.25'].map(s => qLine(s.split(' ')[0], s.split(' ')[1])), 'quote-pad')
    + block([qLine('现价','8.30','今开'),qLine('涨跌','0.11','最高'),qLine('涨幅','1.34%','最低'),qLine('总量','36648','量比','c-ye'),qLine('外盘','21247','内盘')])
    + block([qLine('换手','2.00%','股本','c-gy'),qLine('净资','2.76','流通','c-gy'),qLine('收益(三)','0.196','PE(动','c-gy')], 'quote-pad2')
    + block([flowLine('净流入额','435.','c-re'),flowLine('大宗流入','327.','c-re'),flowLine('5日净流入额','-3902','c-gr'),flowLine('5日大宗流入','-4515','c-gr')], 'quote-pad')
    + ticks.map(t => `<div class="tick-line d-flex"><span class="tick-t">${t[0]}</span><span class="tick-p">${t[1]}</span><span class="${t[3]}">${t[2]}</span></div>`).join('');

  // 底部标签
  const ext = ['扩展区','关联报价','资金分布','机构攻略','行业攻略','资金驱动力','经济指标','热点题材','智能解盘','个股评级','个股资讯','财经精选','委托成交','持仓股份'];
  $('extLeft').innerHTML = ext.map((e, i) => `<div class="ext-cell ${i == 0 ? 'ext-short' : ''} ${i == 5 ? 'ext-wide' : ''} ${i < 3 ? 'ext-gy' : ''}">${e}</div>`).join('');
  $('extMid').innerHTML = ['主力','分布','龙虎','风向'].map((e, i) => `<div class="ext-r1 ${i == 0 ? 'ext-on' : ''}">${e}</div>`).join('');
  $('extRight').innerHTML = ['笔','价','細','盘','势','指'].map((e, i) => `<div class="ext-r2 ${i == 0 ? 'ext-on' : ''}">${e}</div>`).join('');

  // 左下树
  const tree = [['ic-arrow','单帐户策略卖出'],['ic-chart','多帐户策略买入'],['ic-user','多帐户策略卖出'],['ic-zoom','新股申购',1],['ic-arrow','新股申购计划'],['ic-arrow','单帐户新股申购'],['ic-arrow','多帐户新股申购'],['ic-zoomfire','多帐户组合通',1],['ic-chart','组合通编辑'],['ic-chart','多帐户组合通买入'],['ic-user','多帐户组合通卖出'],['ic-user','多帐户登录设置',1,1],['ic-key','多帐户修改密码',1]];
  $('treeList').innerHTML = tree.map(t => `<div class="tree-item ${t[2] ? 'tree-top' : ''}"><svg width="16" height="16"><use href="#${t[0]}"/></svg>${t[3] ? `<span class="tree-sel">${t[1]}</span>` : t[1]}</div>`).join('');

  // 登录表单
  const drop = `<span class="acc-drop"><svg width="10" height="8"><use href="#ic-down"/></svg></span>`;
  const kbd = `<span class="acc-kbd"><svg width="16" height="14"><use href="#ic-kbd"/></svg></span>`;
  const fields = [['请选择券商:','海通证券',drop],['请选择营业部:','10位客户号直接登陆',drop],['帐户类型:','资金帐号',drop],['资金帐号:','',''],['交易密码:','',kbd,1],['安全方式:','通讯密码',drop],['认证口令:','',kbd,1]];
  $('accFields').innerHTML = fields.map(f => `<div class="acc-field d-flex align-items-center"><span class="acc-lab">${f[0]}</span><div class="acc-input ${f[3] ? 'acc-sunk' : ''}">${f[1]}${f[2]}</div></div>`).join('');
</script>
<script src="https://cdn.jsdelivr.net/npm/bootstrap@5.3.3/dist/js/bootstrap.bundle.min.js"></script>
</body>
</html>
